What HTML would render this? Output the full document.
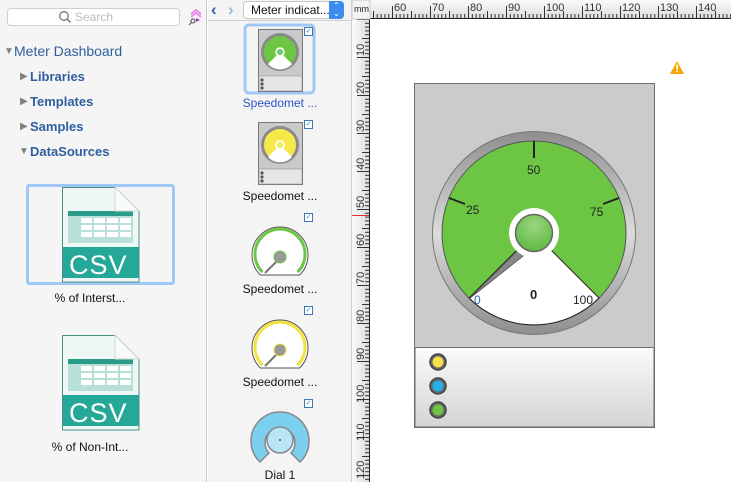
<!DOCTYPE html>
<html><head><meta charset="utf-8"><style>
*{margin:0;padding:0;box-sizing:border-box}
body{width:731px;height:482px;overflow:hidden;background:#fff;font-family:"Liberation Sans",sans-serif;position:relative}
.a{position:absolute}
#left{left:0;top:0;width:207px;height:482px;background:#f5f5f5;border-right:1px solid #c8c8c8}
#mid{left:208px;top:0;width:144px;height:482px;background:#f4f4f4;border-right:1px solid #d0d0d0}
.tree{font-size:13px;font-weight:bold;color:#2f5f9e}
.tri{color:#808080;font-size:10px}
.lbl{font-size:12px;color:#111;text-align:center}
.cb{width:9px;height:9px;border:1px solid #3a78b8;background:#fff;font-size:7px;line-height:7px;color:#3a78b8;text-align:center}
</style></head><body>
<div class="a" id="left"></div>
<div class="a" style="left:7px;top:8px;width:173px;height:18px;border:1px solid #cfcfcf;border-radius:4px;background:#fff"></div>
<svg class="a" style="left:58px;top:10px" width="14" height="14"><circle cx="6" cy="6" r="4.3" fill="none" stroke="#777" stroke-width="1.3"/><line x1="9" y1="9" x2="12.5" y2="12.5" stroke="#777" stroke-width="1.5"/></svg>
<div class="a" style="left:75px;top:10px;font-size:12px;color:#bdbdbd">Search</div>
<svg class="a" style="left:187px;top:7px" width="18" height="18"><path d="M4 7 L9 3 L14 7 M4 10 L9 6 L14 10" fill="none" stroke="#e58ef0" stroke-width="2"/><circle cx="6" cy="14" r="2" fill="none" stroke="#444" stroke-width="1"/><line x1="4.5" y1="15.5" x2="2" y2="18" stroke="#444"/><path d="M9 11 L13 13 L9 15Z" fill="#a33bc0"/></svg>
<div class="a tri" style="left:4px;top:46px">▼</div>
<div class="a" style="left:14px;top:43px;font-size:14px;color:#2f5f9e">Meter Dashboard</div>
<div class="a tri" style="left:20px;top:71px">▶</div><div class="a tree" style="left:30px;top:69px">Libraries</div>
<div class="a tri" style="left:20px;top:96px">▶</div><div class="a tree" style="left:30px;top:94px">Templates</div>
<div class="a tri" style="left:20px;top:121px">▶</div><div class="a tree" style="left:30px;top:119px">Samples</div>
<div class="a tri" style="left:19px;top:146px">▼</div><div class="a tree" style="left:30px;top:144px">DataSources</div>
<div class="a" style="left:26px;top:184px;width:149px;height:101px;border:3px solid #9fc8f6;border-radius:3px"></div>
<svg class="a" style="left:62px;top:187px" width="78" height="96" id="csv1"><defs><g id="csvg"><path d="M0.5 0.5 H53 L77 24 V95 H0.5Z" fill="#eef7f4" stroke="#4a8f86"/><rect x="6" y="24" width="65" height="32" fill="#b8e0d8"/><rect x="6" y="24" width="65" height="5" fill="#2a9d8a"/><g fill="#fff"><rect x="19" y="31" width="11" height="5"/><rect x="32" y="31" width="11" height="5"/><rect x="45" y="31" width="11" height="5"/><rect x="58" y="31" width="11" height="5"/><rect x="19" y="38" width="11" height="5"/><rect x="32" y="38" width="11" height="5"/><rect x="45" y="38" width="11" height="5"/><rect x="58" y="38" width="11" height="5"/><rect x="19" y="45" width="11" height="5"/><rect x="32" y="45" width="11" height="5"/><rect x="45" y="45" width="11" height="5"/><rect x="58" y="45" width="11" height="5"/></g><rect x="1" y="60" width="76" height="31" fill="#26a898"/><text x="7" y="87" font-family="Liberation Sans,sans-serif" font-size="27" fill="#fff" letter-spacing="1">CSV</text><path d="M53 0.5 V24 H77Z" fill="#f8fbfa" stroke="#cfd9d6"/></g></defs><use href="#csvg"/></svg>
<div class="a lbl" style="left:20px;top:291px;width:140px">% of Interst...</div>
<svg class="a" style="left:62px;top:335px" width="78" height="96"><use href="#csvg"/></svg>
<div class="a lbl" style="left:20px;top:440px;width:140px">% of Non-Int...</div>

<div class="a" id="mid"></div>
<div class="a" style="left:208px;top:20px;width:144px;height:1px;background:#d0d0d0"></div>
<div class="a" style="left:211px;top:0px;font-size:17px;color:#2f5f9e;font-weight:bold">‹</div>
<div class="a" style="left:228px;top:0px;font-size:17px;color:#9bb6d6;font-weight:bold">›</div>
<div class="a" style="left:243px;top:1px;width:101px;height:18px;border:1px solid #c6c6c6;border-radius:4px;background:#fff;font-size:12px;line-height:16px;padding-left:7px;color:#111">Meter indicat...</div>
<div class="a" style="left:329px;top:1px;width:15px;height:18px;background:#3b8ef0;border-radius:0 4px 4px 0;color:#fff;font-size:8px;line-height:8px;text-align:center;padding-top:1px">⌃<br>⌄</div>

<svg class="a" style="left:0;top:0" width="731" height="482">
<defs>
<g id="mini">
<rect x="0.5" y="0.5" width="44" height="62" fill="#c9c9c9" stroke="#777"/>
<rect x="1" y="47" width="43" height="15" fill="#e6e6e6" stroke="#888" stroke-width="0.5"/>
<circle cx="4" cy="51" r="1.6" fill="#555"/><circle cx="4" cy="55" r="1.6" fill="#555"/><circle cx="4" cy="59" r="1.6" fill="#555"/>
<circle cx="22" cy="23" r="19" fill="#8a8a8a"/>
</g>
<g id="speed">
<path d="M10.4 50 A28 28 0 1 1 49.6 50 Z" fill="#fff" stroke="#555" stroke-width="1"/>
<path d="M12.5 47 A25 25 0 1 1 47.5 47" fill="none" stroke-width="3"/>
<line x1="30" y1="33" x2="15" y2="48" stroke="#777" stroke-width="2"/>
<circle cx="30" cy="32" r="6" fill="#999"/>
</g>
</defs>
<rect x="245" y="25" width="69" height="68" rx="4" fill="none" stroke="#9fc8f6" stroke-width="3"/>
<g transform="translate(258,29)"><use href="#mini"/><circle cx="22" cy="23" r="16" fill="#6cc644"/><path d="M22 23 L10 35 A16 16 0 0 0 34 35Z" fill="#fff"/><circle cx="22" cy="23" r="4" fill="#7c7" stroke="#fff" stroke-width="1.5"/></g>
<g transform="translate(258,122)"><use href="#mini"/><circle cx="22" cy="23" r="16" fill="#f7e84a"/><path d="M22 23 L10 35 A16 16 0 0 0 34 35Z" fill="#fff"/><circle cx="22" cy="23" r="4" fill="#ee6" stroke="#fff" stroke-width="1.5"/></g>
<g transform="translate(250,225)"><use href="#speed" stroke="#6cc644"/></g>
<g transform="translate(250,318)"><use href="#speed" stroke="#f2e23a"/></g>
<g transform="translate(250,410)"><path d="M10 52 A29 29 0 1 1 50 52 L41 43 A15 15 0 1 0 19 43 Z" fill="#7ccfef" stroke="#888" stroke-width="1.5"/><circle cx="30" cy="30" r="13" fill="#b9e6f7" stroke="#888" stroke-width="1.5"/><circle cx="30" cy="30" r="1" fill="#555"/></g>
</svg>
<div class="a cb" style="left:304px;top:27px">✓</div>
<div class="a cb" style="left:304px;top:120px">✓</div>
<div class="a cb" style="left:304px;top:213px">✓</div>
<div class="a cb" style="left:304px;top:306px">✓</div>
<div class="a cb" style="left:304px;top:399px">✓</div>
<div class="a lbl" style="left:230px;top:96px;width:100px;color:#2b55c8">Speedomet ...</div>
<div class="a lbl" style="left:230px;top:189px;width:100px">Speedomet ...</div>
<div class="a lbl" style="left:230px;top:282px;width:100px">Speedomet ...</div>
<div class="a lbl" style="left:230px;top:375px;width:100px">Speedomet ...</div>
<div class="a lbl" style="left:230px;top:468px;width:100px">Dial 1</div>

<svg class="a" style="left:352px;top:0" width="379" height="482">
<defs>
<pattern id="hp" x="2" y="0" width="38" height="19" patternUnits="userSpaceOnUse"><g stroke="#333" stroke-width="1"><line x1="0.5" y1="6" x2="0.5" y2="19"/><line x1="4.3" y1="14" x2="4.3" y2="19"/><line x1="8.1" y1="14" x2="8.1" y2="19"/><line x1="11.9" y1="14" x2="11.9" y2="19"/><line x1="15.7" y1="14" x2="15.7" y2="19"/><line x1="19.5" y1="11" x2="19.5" y2="19"/><line x1="23.3" y1="14" x2="23.3" y2="19"/><line x1="27.1" y1="14" x2="27.1" y2="19"/><line x1="30.9" y1="14" x2="30.9" y2="19"/><line x1="34.7" y1="14" x2="34.7" y2="19"/></g></pattern>
<pattern id="vp" x="0" y="19" width="18" height="38" patternUnits="userSpaceOnUse"><g stroke="#333" stroke-width="1"><line y1="0.5" x1="5" y2="0.5" x2="18"/><line y1="4.3" x1="13" y2="4.3" x2="18"/><line y1="8.1" x1="13" y2="8.1" x2="18"/><line y1="11.9" x1="13" y2="11.9" x2="18"/><line y1="15.7" x1="13" y2="15.7" x2="18"/><line y1="19.5" x1="10" y2="19.5" x2="18"/><line y1="23.3" x1="13" y2="23.3" x2="18"/><line y1="27.1" x1="13" y2="27.1" x2="18"/><line y1="30.9" x1="13" y2="30.9" x2="18"/><line y1="34.7" x1="13" y2="34.7" x2="18"/></g></pattern>
<linearGradient id="rg" x1="0" y1="0" x2="0" y2="1"><stop offset="0" stop-color="#fafafa"/><stop offset="1" stop-color="#dcdcdc"/></linearGradient>
<linearGradient id="rgv" x1="0" y1="0" x2="1" y2="0"><stop offset="0" stop-color="#fafafa"/><stop offset="1" stop-color="#dcdcdc"/></linearGradient>
</defs>
<rect x="18" y="0" width="361" height="19" fill="url(#rg)"/>
<rect x="18" y="0" width="361" height="19" fill="url(#hp)"/>
<line x1="18" y1="18.5" x2="379" y2="18.5" stroke="#222"/>
<rect x="0" y="19" width="18" height="463" fill="url(#rgv)"/>
<rect x="0" y="19" width="18" height="463" fill="url(#vp)"/>
<line x1="17.5" y1="19" x2="17.5" y2="482" stroke="#222"/>
<rect x="0" y="0" width="18" height="19" fill="#f4f4f4" stroke="#ccc"/>
<text x="2" y="12" font-size="9" fill="#222">mm</text>
<g font-size="11" fill="#333">
<text x="42" y="11">60</text><text x="80" y="11">70</text><text x="118" y="11">80</text><text x="156" y="11">90</text><text x="194" y="11">100</text><text x="232" y="11">110</text><text x="270" y="11">120</text><text x="308" y="11">130</text><text x="346" y="11">140</text>
</g>
<g font-size="11" fill="#333">
<text transform="translate(12,56) rotate(-90)">10</text><text transform="translate(12,94) rotate(-90)">20</text><text transform="translate(12,132) rotate(-90)">30</text><text transform="translate(12,170) rotate(-90)">40</text><text transform="translate(12,208) rotate(-90)">50</text><text transform="translate(12,246) rotate(-90)">60</text><text transform="translate(12,284) rotate(-90)">70</text><text transform="translate(12,322) rotate(-90)">80</text><text transform="translate(12,360) rotate(-90)">90</text><text transform="translate(12,403) rotate(-90)">100</text><text transform="translate(12,441) rotate(-90)">110</text><text transform="translate(12,479) rotate(-90)">120</text>
</g>
<line x1="0" y1="215.5" x2="17" y2="215.5" stroke="#d33"/>
</svg>

<svg class="a" style="left:0;top:0" width="731" height="482">
<defs>
<linearGradient id="ring" x1="0" y1="0" x2="0" y2="1"><stop offset="0" stop-color="#8e8e8e"/><stop offset="0.5" stop-color="#dcdcdc"/><stop offset="1" stop-color="#8e8e8e"/></linearGradient>
<linearGradient id="pan" x1="0" y1="0" x2="0" y2="1"><stop offset="0" stop-color="#fbfbfb"/><stop offset="1" stop-color="#d4d4d4"/></linearGradient>
<radialGradient id="hub" cx="0.5" cy="0.3" r="0.7"><stop offset="0" stop-color="#9ad77f"/><stop offset="1" stop-color="#5fb842"/></radialGradient>
</defs>
<path d="M677 61 L684 74 H670Z" fill="#f5a800"/><rect x="676.3" y="64.5" width="1.6" height="5" fill="#fff"/><rect x="676.3" y="70.5" width="1.6" height="1.6" fill="#fff"/>
<rect x="414.5" y="83.5" width="240" height="344" fill="#cbcbcb" stroke="#6d6d6d"/>
<rect x="415" y="347.5" width="239" height="79.5" fill="url(#pan)" stroke="#6d6d6d" stroke-width="1"/>
<circle cx="534" cy="233" r="101.5" fill="url(#ring)" stroke="#777"/>
<circle cx="534" cy="233" r="92" fill="#6cc644" stroke="#555" stroke-width="1"/>
<path d="M534 233 L469 298 A92 92 0 0 0 599 298 Z" fill="#fff" stroke="#222" stroke-width="1"/>
<g stroke="#222" stroke-width="2"><line x1="534" y1="141" x2="534" y2="158"/><line x1="449" y1="198" x2="465" y2="204"/><line x1="619" y1="198" x2="603" y2="204"/></g>
<path d="M469 299 L525 243 L532 249Z" fill="#888" stroke="#555" stroke-width="0.8"/>
<circle cx="534" cy="233" r="25" fill="#fff"/>
<circle cx="534" cy="233" r="18.5" fill="url(#hub)" stroke="#666" stroke-width="1.5"/>
<g font-size="12" fill="#222" font-family="Liberation Sans,sans-serif">
<text x="527" y="174">50</text><text x="466" y="214">25</text><text x="590" y="216">75</text><text x="474" y="304" fill="#2a6fb8">0</text><text x="573" y="304">100</text>
<text x="530" y="299" font-weight="bold" font-size="13">0</text></g>
<g stroke="#444" stroke-width="1.5"><circle cx="438" cy="362" r="8" fill="#666"/><circle cx="438" cy="386" r="8" fill="#666"/><circle cx="438" cy="410" r="8" fill="#666"/></g>
<circle cx="438" cy="362" r="5.5" fill="#f5e14a"/><circle cx="438" cy="386" r="5.5" fill="#24aee6"/><circle cx="438" cy="410" r="5.5" fill="#6cc644"/>
</svg>
</body></html>
